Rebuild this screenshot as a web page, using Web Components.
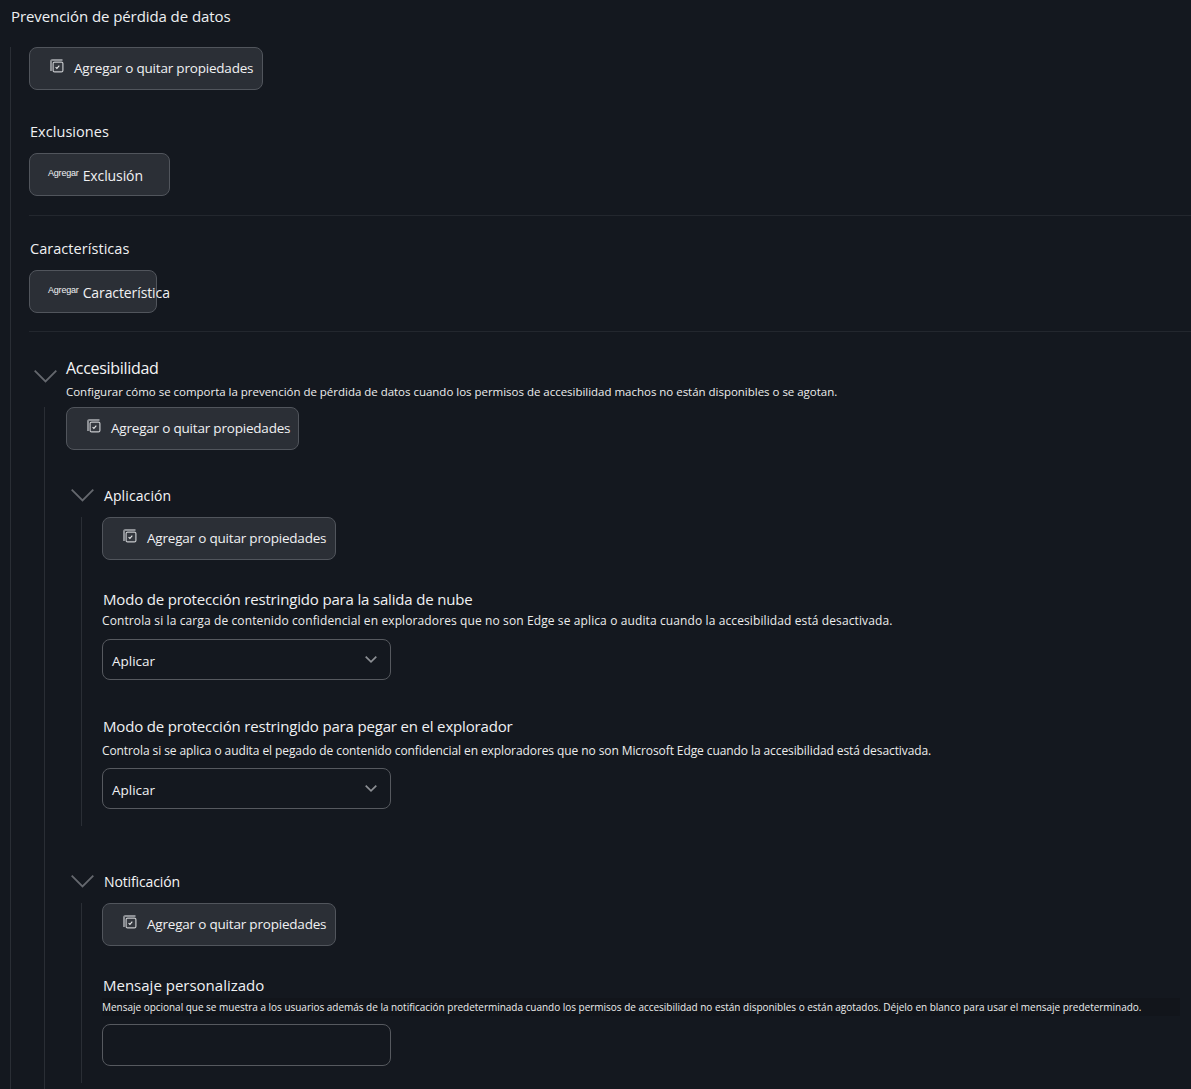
<!DOCTYPE html>
<html lang="es">
<head>
<meta charset="utf-8">
<title>Prevención de pérdida de datos</title>
<style>
  html, body { margin: 0; height: 1089px; overflow: hidden; background: #14181f; }
  body { font-family: "Open Sans", "Liberation Sans", sans-serif; color: #f0f1f3; }
</style>
</head>
<body>
<x-page heading="Prevención de pérdida de datos">
  <x-action kind="props" style="margin-bottom:31px">Agregar o quitar propiedades</x-action>

  <x-label>Exclusiones</x-label>
  <x-action kind="add" style="width:141px">Exclusión</x-action>
  <x-divider style="margin:19px 0 22px"></x-divider>

  <x-label>Características</x-label>
  <x-action kind="add" style="width:128px">Característica</x-action>
  <x-divider style="margin:18px 0 24px"></x-divider>

  <x-section heading="Accesibilidad" size="16"
    note="Configurar cómo se comporta la prevención de pérdida de datos cuando los permisos de accesibilidad machos no están disponibles o se agotan."
    style="--text-left:37px; --chev-left:5px; --chev-top:14px; --rule-left:15px; --body-pad:21px; --body-end:6px; --title-ls:-.3px">
    <x-action kind="props" style="width:233px; margin-bottom:33px">Agregar o quitar propiedades</x-action>

    <x-section heading="Aplicación" size="14" style="--text-left:38px; --chev-left:5px; --chev-top:6px; --rule-left:15px; --body-pad:20px; --body-end:17px; --head-h:34px; --title-top:1px; --title-ls:.1px; margin-bottom:43px">
      <x-action kind="props" style="margin-bottom:28px">Agregar o quitar propiedades</x-action>
      <x-field heading="Modo de protección restringido para la salida de nube"
        note="Controla si la carga de contenido confidencial en exploradores que no son Edge se aplica o audita cuando la accesibilidad está desactivada."
        style="--note-ls:.11px; margin-bottom:35px">
        <x-select value="Aplicar"></x-select>
      </x-field>
      <x-field heading="Modo de protección restringido para pegar en el explorador"
        note="Controla si se aplica o audita el pegado de contenido confidencial en exploradores que no son Microsoft Edge cuando la accesibilidad está desactivada."
        style="--note-ls:-.09px; --note-top:5px; --note-gap:8px">
        <x-select value="Aplicar"></x-select>
      </x-field>
    </x-section>

    <x-section heading="Notificación" size="14" style="--text-left:38px; --chev-left:5px; --chev-top:6px; --rule-left:15px; --body-pad:20px; --body-end:17px; --head-h:34px; --title-top:1px; --title-ls:-.13px">
      <x-action kind="props" style="margin-bottom:28px">Agregar o quitar propiedades</x-action>
      <x-field heading="Mensaje personalizado" small
        note="Mensaje opcional que se muestra a los usuarios además de la notificación predeterminada cuando los permisos de accesibilidad no están disponibles o están agotados. Déjelo en blanco para usar el mensaje predeterminado."
        style="--note-gap:8px; --field-ls:0px">
        <x-select style="height:42px"></x-select>
      </x-field>
    </x-section>
  </x-section>
</x-page>

<script>
  function define(tag, build) {
    customElements.define(tag, class extends HTMLElement {
      connectedCallback() {
        if (this.shadowRoot) return;
        this.attachShadow({ mode: 'open' }).innerHTML = build(this);
      }
    });
  }

  define('x-page', (el) => `
    <style>
      :host { display: block; }
      h1 { margin: 0; height: 32px; padding-left: 11px; font: 400 15px/32px "Open Sans", sans-serif; letter-spacing: -.08px; color: #eef0f2; }
      .tree { margin: 15px 0 0 10px; padding-left: 18px; border-left: 1px solid #2a2e35; }
    </style>
    <h1>${el.getAttribute('heading')}</h1>
    <div class="tree"><slot></slot></div>`);

  define('x-label', () => `
    <style>
      :host { display: block; height: 21px; margin-bottom: 11px; padding-left: 1px; font-size: 14.500px; line-height: 21px; letter-spacing: .05px; color: #f0f1f3; }
    </style>
    <slot></slot>`);

  define('x-divider', () => `
    <style>:host { display: block; height: 1px; background: #23272e; }</style>`);

  // stacked checkbox: dim sheet behind, outlined sheet with the tick in front
  const propsIcon = `<svg width="14" height="14" viewBox="0 0 14 14" fill="none">
      <path d="M1 12V2.500A1.500 1.500 0 0 1 2.500 1H12.500" stroke="#8d9095" stroke-width="2"/>
      <rect x="3.100" y="3.100" width="9.800" height="9.800" rx="1.500" fill="#34383f" stroke="#c6c8cb" stroke-width="1.200"/>
      <path d="M5.600 8.100l1.300 1.300 2.400-2.800" stroke="#e8e9ea" stroke-width="1.100"/>
    </svg>`;

  define('x-action', (el) => {
    const add = el.getAttribute('kind') == 'add';
    return `
    <style>
      :host { display: block; box-sizing: border-box; width: 234px; height: 43px; border: 1px solid #51555c; border-radius: 8px; background: #2b2f36; }
      .in { display: flex; align-items: center; height: 100%; padding-left: ${add ? 18 : 20}px; white-space: nowrap; font-size: ${add ? 14 : 13.500}px; letter-spacing: ${add ? -.1 : -.2}px; color: #f0f1f3; }
      span { position: relative; top: ${add ? 1 : -1}px; }
      svg { margin: -5px 10px 0 0; flex: none; }
      small { font: 400 9px/1 "Liberation Sans", sans-serif; letter-spacing: -.2px; margin: -3px 4px 0 0; }
    </style>
    <div class="in">${add ? '<small>Agregar</small>' : propsIcon}<span><slot></slot></span></div>`;
  });

  define('x-section', (el) => {
    const note = el.getAttribute('note');
    return `
    <style>
      :host { display: block; }
      .head { position: relative; min-height: var(--head-h, 0); padding-left: var(--text-left); }
      .chev { position: absolute; left: var(--chev-left); top: var(--chev-top); }
      .title { padding-top: var(--title-top, 0); font-size: ${el.getAttribute('size')}px; line-height: 24px; letter-spacing: var(--title-ls); color: #f4f5f6; }
      .note { margin-top: 4px; height: 23px; font-size: 11.500px; line-height: 16px; letter-spacing: -.02px; color: #eceded; white-space: nowrap; }
      .body { margin-left: var(--rule-left); padding: 0 0 var(--body-end) var(--body-pad); border-left: 1px solid #2a2e35; }
    </style>
    <div class="head">
      <svg class="chev" width="23" height="13" viewBox="0 0 23 13" fill="none"><path d="M.7.700L11.500 11.500 22.300.700" stroke="#65686e" stroke-width="1.800"/></svg>
      <div class="title">${el.getAttribute('heading')}</div>
      ${note ? `<div class="note">${note}</div>` : ''}
    </div>
    <div class="body"><slot></slot></div>`;
  });

  define('x-field', (el) => {
    const small = el.hasAttribute('small');
    return `
    <style>
      :host { display: block; }
      .title { padding-left: 1px; font-size: 15px; line-height: 22px; letter-spacing: var(--field-ls, -.17px); color: #f0f1f3; }
      .note { height: 18px; margin: var(--note-top, 2px) 0 var(--note-gap, 9px); font-size: ${small ? 10 : 12}px; line-height: 18px; white-space: nowrap; letter-spacing: ${small ? '-.02px' : 'var(--note-ls)'}; color: #eceded; ${small ? 'background: #12151b; width: 1078px;' : ''} }
    </style>
    <div class="title">${el.getAttribute('heading')}</div>
    <div class="note">${el.getAttribute('note')}</div>
    <slot></slot>`;
  });

  define('x-select', (el) => {
    const value = el.getAttribute('value');
    return `
    <style>
      :host { display: flex; align-items: center; justify-content: space-between; box-sizing: border-box; width: 289px; height: 41px; padding: 2px 13px 0 9px; border: 1px solid #56595f; border-radius: 8px; background: #14181f; font-size: 13.500px; color: #f0f1f3; }
      svg { margin-top: -3px; }
    </style>
    <span>${value || ''}</span>
    ${value ? '<svg width="12" height="7" viewBox="0 0 12 7" fill="none"><path d="M.7.700L6 5.800 11.300.700" stroke="#8c8f94" stroke-width="1.700"/></svg>' : ''}`;
  });
</script>
</body>
</html>
